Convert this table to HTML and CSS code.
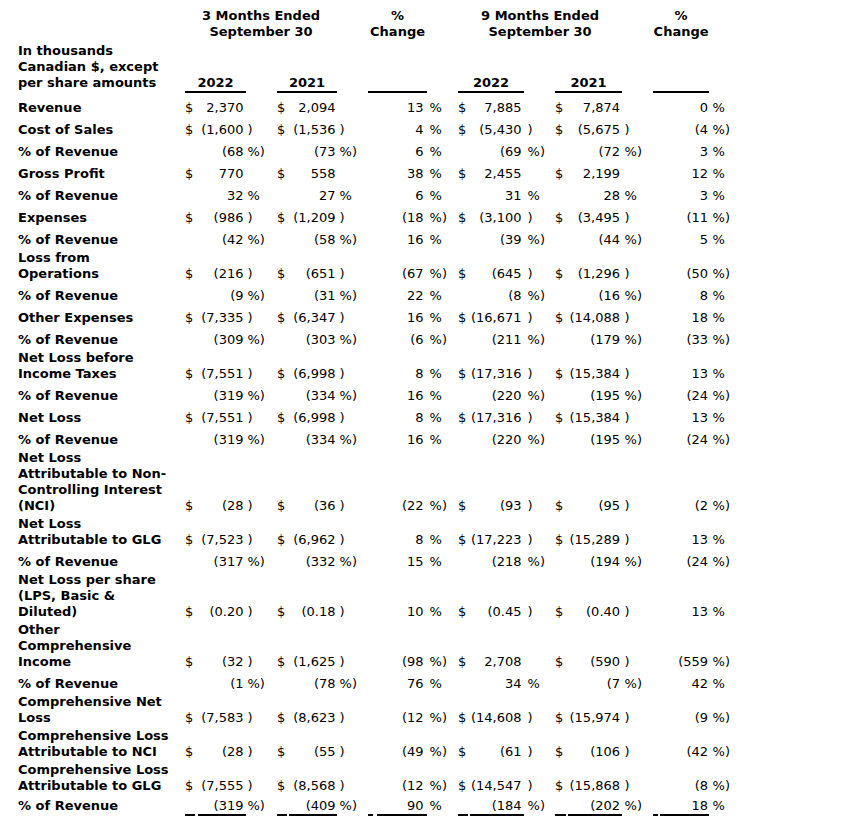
FILE: index.html
```html
<!DOCTYPE html>
<html lang="en">
<head>
<meta charset="utf-8">
<title>Results of Operations</title>
<link rel="stylesheet" href="styles.css">
</head>
<body>
<table class="fin">
<colgroup>
<col class="w-lbl">
<col class="w-c1"><col class="w-n1"><col class="w-s">
<col class="w-c2"><col class="w-n2"><col class="w-s">
<col class="w-c3"><col class="w-n3"><col class="w-s">
<col class="w-c4"><col class="w-n4"><col class="w-s">
<col class="w-c5"><col class="w-n5"><col class="w-s">
<col class="w-c6"><col class="w-n6"><col class="w-s">
</colgroup>
<thead>
<tr class="hd1">
<td></td>
<td colspan="5">3 Months Ended<br>September 30</td><td></td>
<td colspan="2">%<br>Change</td><td></td>
<td colspan="5">9 Months Ended<br>September 30</td><td></td>
<td colspan="2">%<br>Change</td><td></td>
</tr>
<tr class="hd2">
<td class="lbl">In thousands Canadian $, except per share amounts</td>
<td colspan="2" class="yr">2022</td><td></td>
<td colspan="2" class="yr">2021</td><td></td>
<td colspan="2" class="yr">&nbsp;</td><td></td>
<td colspan="2" class="yr">2022</td><td></td>
<td colspan="2" class="yr">2021</td><td></td>
<td colspan="2" class="yr">&nbsp;</td><td></td>
</tr>
</thead>
<tbody>
<tr><td class="lbl">Revenue</td>
<td class="cur">$</td><td class="num">2,370</td><td class="suf"></td>
<td class="cur">$</td><td class="num">2,094</td><td class="suf"></td>
<td class="cur"></td><td class="num">13</td><td class="suf">%</td>
<td class="cur">$</td><td class="num">7,885</td><td class="suf"></td>
<td class="cur">$</td><td class="num">7,874</td><td class="suf"></td>
<td class="cur"></td><td class="num">0</td><td class="suf">%</td></tr>
<tr><td class="lbl">Cost of Sales</td>
<td class="cur">$</td><td class="num">(1,600</td><td class="suf">)</td>
<td class="cur">$</td><td class="num">(1,536</td><td class="suf">)</td>
<td class="cur"></td><td class="num">4</td><td class="suf">%</td>
<td class="cur">$</td><td class="num">(5,430</td><td class="suf">)</td>
<td class="cur">$</td><td class="num">(5,675</td><td class="suf">)</td>
<td class="cur"></td><td class="num">(4</td><td class="suf">%)</td></tr>
<tr><td class="lbl">% of Revenue</td>
<td class="cur"></td><td class="num">(68</td><td class="suf">%)</td>
<td class="cur"></td><td class="num">(73</td><td class="suf">%)</td>
<td class="cur"></td><td class="num">6</td><td class="suf">%</td>
<td class="cur"></td><td class="num">(69</td><td class="suf">%)</td>
<td class="cur"></td><td class="num">(72</td><td class="suf">%)</td>
<td class="cur"></td><td class="num">3</td><td class="suf">%</td></tr>
<tr><td class="lbl">Gross Profit</td>
<td class="cur">$</td><td class="num">770</td><td class="suf"></td>
<td class="cur">$</td><td class="num">558</td><td class="suf"></td>
<td class="cur"></td><td class="num">38</td><td class="suf">%</td>
<td class="cur">$</td><td class="num">2,455</td><td class="suf"></td>
<td class="cur">$</td><td class="num">2,199</td><td class="suf"></td>
<td class="cur"></td><td class="num">12</td><td class="suf">%</td></tr>
<tr><td class="lbl">% of Revenue</td>
<td class="cur"></td><td class="num">32</td><td class="suf">%</td>
<td class="cur"></td><td class="num">27</td><td class="suf">%</td>
<td class="cur"></td><td class="num">6</td><td class="suf">%</td>
<td class="cur"></td><td class="num">31</td><td class="suf">%</td>
<td class="cur"></td><td class="num">28</td><td class="suf">%</td>
<td class="cur"></td><td class="num">3</td><td class="suf">%</td></tr>
<tr><td class="lbl">Expenses</td>
<td class="cur">$</td><td class="num">(986</td><td class="suf">)</td>
<td class="cur">$</td><td class="num">(1,209</td><td class="suf">)</td>
<td class="cur"></td><td class="num">(18</td><td class="suf">%)</td>
<td class="cur">$</td><td class="num">(3,100</td><td class="suf">)</td>
<td class="cur">$</td><td class="num">(3,495</td><td class="suf">)</td>
<td class="cur"></td><td class="num">(11</td><td class="suf">%)</td></tr>
<tr><td class="lbl">% of Revenue</td>
<td class="cur"></td><td class="num">(42</td><td class="suf">%)</td>
<td class="cur"></td><td class="num">(58</td><td class="suf">%)</td>
<td class="cur"></td><td class="num">16</td><td class="suf">%</td>
<td class="cur"></td><td class="num">(39</td><td class="suf">%)</td>
<td class="cur"></td><td class="num">(44</td><td class="suf">%)</td>
<td class="cur"></td><td class="num">5</td><td class="suf">%</td></tr>
<tr><td class="lbl">Loss from Operations</td>
<td class="cur">$</td><td class="num">(216</td><td class="suf">)</td>
<td class="cur">$</td><td class="num">(651</td><td class="suf">)</td>
<td class="cur"></td><td class="num">(67</td><td class="suf">%)</td>
<td class="cur">$</td><td class="num">(645</td><td class="suf">)</td>
<td class="cur">$</td><td class="num">(1,296</td><td class="suf">)</td>
<td class="cur"></td><td class="num">(50</td><td class="suf">%)</td></tr>
<tr><td class="lbl">% of Revenue</td>
<td class="cur"></td><td class="num">(9</td><td class="suf">%)</td>
<td class="cur"></td><td class="num">(31</td><td class="suf">%)</td>
<td class="cur"></td><td class="num">22</td><td class="suf">%</td>
<td class="cur"></td><td class="num">(8</td><td class="suf">%)</td>
<td class="cur"></td><td class="num">(16</td><td class="suf">%)</td>
<td class="cur"></td><td class="num">8</td><td class="suf">%</td></tr>
<tr><td class="lbl">Other Expenses</td>
<td class="cur">$</td><td class="num">(7,335</td><td class="suf">)</td>
<td class="cur">$</td><td class="num">(6,347</td><td class="suf">)</td>
<td class="cur"></td><td class="num">16</td><td class="suf">%</td>
<td class="cur">$</td><td class="num">(16,671</td><td class="suf">)</td>
<td class="cur">$</td><td class="num">(14,088</td><td class="suf">)</td>
<td class="cur"></td><td class="num">18</td><td class="suf">%</td></tr>
<tr><td class="lbl">% of Revenue</td>
<td class="cur"></td><td class="num">(309</td><td class="suf">%)</td>
<td class="cur"></td><td class="num">(303</td><td class="suf">%)</td>
<td class="cur"></td><td class="num">(6</td><td class="suf">%)</td>
<td class="cur"></td><td class="num">(211</td><td class="suf">%)</td>
<td class="cur"></td><td class="num">(179</td><td class="suf">%)</td>
<td class="cur"></td><td class="num">(33</td><td class="suf">%)</td></tr>
<tr><td class="lbl">Net Loss before Income Taxes</td>
<td class="cur">$</td><td class="num">(7,551</td><td class="suf">)</td>
<td class="cur">$</td><td class="num">(6,998</td><td class="suf">)</td>
<td class="cur"></td><td class="num">8</td><td class="suf">%</td>
<td class="cur">$</td><td class="num">(17,316</td><td class="suf">)</td>
<td class="cur">$</td><td class="num">(15,384</td><td class="suf">)</td>
<td class="cur"></td><td class="num">13</td><td class="suf">%</td></tr>
<tr><td class="lbl">% of Revenue</td>
<td class="cur"></td><td class="num">(319</td><td class="suf">%)</td>
<td class="cur"></td><td class="num">(334</td><td class="suf">%)</td>
<td class="cur"></td><td class="num">16</td><td class="suf">%</td>
<td class="cur"></td><td class="num">(220</td><td class="suf">%)</td>
<td class="cur"></td><td class="num">(195</td><td class="suf">%)</td>
<td class="cur"></td><td class="num">(24</td><td class="suf">%)</td></tr>
<tr><td class="lbl">Net Loss</td>
<td class="cur">$</td><td class="num">(7,551</td><td class="suf">)</td>
<td class="cur">$</td><td class="num">(6,998</td><td class="suf">)</td>
<td class="cur"></td><td class="num">8</td><td class="suf">%</td>
<td class="cur">$</td><td class="num">(17,316</td><td class="suf">)</td>
<td class="cur">$</td><td class="num">(15,384</td><td class="suf">)</td>
<td class="cur"></td><td class="num">13</td><td class="suf">%</td></tr>
<tr><td class="lbl">% of Revenue</td>
<td class="cur"></td><td class="num">(319</td><td class="suf">%)</td>
<td class="cur"></td><td class="num">(334</td><td class="suf">%)</td>
<td class="cur"></td><td class="num">16</td><td class="suf">%</td>
<td class="cur"></td><td class="num">(220</td><td class="suf">%)</td>
<td class="cur"></td><td class="num">(195</td><td class="suf">%)</td>
<td class="cur"></td><td class="num">(24</td><td class="suf">%)</td></tr>
<tr><td class="lbl">Net Loss Attributable to Non-Controlling Interest (NCI)</td>
<td class="cur">$</td><td class="num">(28</td><td class="suf">)</td>
<td class="cur">$</td><td class="num">(36</td><td class="suf">)</td>
<td class="cur"></td><td class="num">(22</td><td class="suf">%)</td>
<td class="cur">$</td><td class="num">(93</td><td class="suf">)</td>
<td class="cur">$</td><td class="num">(95</td><td class="suf">)</td>
<td class="cur"></td><td class="num">(2</td><td class="suf">%)</td></tr>
<tr><td class="lbl">Net Loss Attributable to GLG</td>
<td class="cur">$</td><td class="num">(7,523</td><td class="suf">)</td>
<td class="cur">$</td><td class="num">(6,962</td><td class="suf">)</td>
<td class="cur"></td><td class="num">8</td><td class="suf">%</td>
<td class="cur">$</td><td class="num">(17,223</td><td class="suf">)</td>
<td class="cur">$</td><td class="num">(15,289</td><td class="suf">)</td>
<td class="cur"></td><td class="num">13</td><td class="suf">%</td></tr>
<tr><td class="lbl">% of Revenue</td>
<td class="cur"></td><td class="num">(317</td><td class="suf">%)</td>
<td class="cur"></td><td class="num">(332</td><td class="suf">%)</td>
<td class="cur"></td><td class="num">15</td><td class="suf">%</td>
<td class="cur"></td><td class="num">(218</td><td class="suf">%)</td>
<td class="cur"></td><td class="num">(194</td><td class="suf">%)</td>
<td class="cur"></td><td class="num">(24</td><td class="suf">%)</td></tr>
<tr><td class="lbl">Net Loss per share (LPS, Basic &amp; Diluted)</td>
<td class="cur">$</td><td class="num">(0.20</td><td class="suf">)</td>
<td class="cur">$</td><td class="num">(0.18</td><td class="suf">)</td>
<td class="cur"></td><td class="num">10</td><td class="suf">%</td>
<td class="cur">$</td><td class="num">(0.45</td><td class="suf">)</td>
<td class="cur">$</td><td class="num">(0.40</td><td class="suf">)</td>
<td class="cur"></td><td class="num">13</td><td class="suf">%</td></tr>
<tr><td class="lbl">Other Comprehensive Income</td>
<td class="cur">$</td><td class="num">(32</td><td class="suf">)</td>
<td class="cur">$</td><td class="num">(1,625</td><td class="suf">)</td>
<td class="cur"></td><td class="num">(98</td><td class="suf">%)</td>
<td class="cur">$</td><td class="num">2,708</td><td class="suf"></td>
<td class="cur">$</td><td class="num">(590</td><td class="suf">)</td>
<td class="cur"></td><td class="num">(559</td><td class="suf">%)</td></tr>
<tr><td class="lbl">% of Revenue</td>
<td class="cur"></td><td class="num">(1</td><td class="suf">%)</td>
<td class="cur"></td><td class="num">(78</td><td class="suf">%)</td>
<td class="cur"></td><td class="num">76</td><td class="suf">%</td>
<td class="cur"></td><td class="num">34</td><td class="suf">%</td>
<td class="cur"></td><td class="num">(7</td><td class="suf">%)</td>
<td class="cur"></td><td class="num">42</td><td class="suf">%</td></tr>
<tr><td class="lbl">Comprehensive Net Loss</td>
<td class="cur">$</td><td class="num">(7,583</td><td class="suf">)</td>
<td class="cur">$</td><td class="num">(8,623</td><td class="suf">)</td>
<td class="cur"></td><td class="num">(12</td><td class="suf">%)</td>
<td class="cur">$</td><td class="num">(14,608</td><td class="suf">)</td>
<td class="cur">$</td><td class="num">(15,974</td><td class="suf">)</td>
<td class="cur"></td><td class="num">(9</td><td class="suf">%)</td></tr>
<tr><td class="lbl">Comprehensive Loss Attributable to NCI</td>
<td class="cur">$</td><td class="num">(28</td><td class="suf">)</td>
<td class="cur">$</td><td class="num">(55</td><td class="suf">)</td>
<td class="cur"></td><td class="num">(49</td><td class="suf">%)</td>
<td class="cur">$</td><td class="num">(61</td><td class="suf">)</td>
<td class="cur">$</td><td class="num">(106</td><td class="suf">)</td>
<td class="cur"></td><td class="num">(42</td><td class="suf">%)</td></tr>
<tr><td class="lbl">Comprehensive Loss Attributable to GLG</td>
<td class="cur">$</td><td class="num">(7,555</td><td class="suf">)</td>
<td class="cur">$</td><td class="num">(8,568</td><td class="suf">)</td>
<td class="cur"></td><td class="num">(12</td><td class="suf">%)</td>
<td class="cur">$</td><td class="num">(14,547</td><td class="suf">)</td>
<td class="cur">$</td><td class="num">(15,868</td><td class="suf">)</td>
<td class="cur"></td><td class="num">(8</td><td class="suf">%)</td></tr>
<tr class="tot"><td class="lbl">% of Revenue</td>
<td class="cur"></td><td class="num">(319</td><td class="suf">%)</td>
<td class="cur"></td><td class="num">(409</td><td class="suf">%)</td>
<td class="cur"></td><td class="num">90</td><td class="suf">%</td>
<td class="cur"></td><td class="num">(184</td><td class="suf">%)</td>
<td class="cur"></td><td class="num">(202</td><td class="suf">%)</td>
<td class="cur"></td><td class="num">18</td><td class="suf">%</td></tr>
</tbody>
</table>
</body>
</html>
```
FILE: styles.css
```css
body {
  margin: 8px;
  background: #ffffff;
  color: #000000;
  font-family: "DejaVu Sans", Verdana, sans-serif;
  font-size: 13px;
  line-height: 16px;
}

.fin {
  border-collapse: separate;
  border-spacing: 0;
  table-layout: fixed;
  width: 732px;
}

.w-lbl { width: 177px; }
.w-s { width: 31px; }
.w-c1 { width: 13px; }
.w-n1 { width: 48px; }
.w-c2 { width: 12px; }
.w-n2 { width: 48px; }
.w-c3 { width: 9px; }
.w-n3 { width: 50px; }
.w-c4 { width: 12px; }
.w-n4 { width: 54px; }
.w-c5 { width: 13px; }
.w-n5 { width: 54px; }
.w-c6 { width: 7px; }
.w-n6 { width: 49px; }

.fin td {
  padding: 0 0 2px 0;
  vertical-align: bottom;
  white-space: nowrap;
}

.fin .lbl {
  padding: 0 14px 2px 10px;
  font-weight: bold;
  white-space: normal;
}

/* header */
.hd1 td {
  padding-bottom: 3px;
  font-weight: bold;
  text-align: center;
}

.hd2 td {
  padding-bottom: 3px;
}

.hd2 .lbl {
  padding-bottom: 5px;
}

.hd2 .yr {
  padding-bottom: 5px;
  font-weight: bold;
  text-align: center;
  background-image: linear-gradient(#000, #000);
  background-repeat: no-repeat;
  background-size: 100% 2px;
  background-position: left 0 bottom 3px;
}

/* body rows */
.fin tbody tr {
  height: 22px;
}

.fin .cur {
  text-align: left;
}

.fin .num {
  text-align: right;
}

.fin .suf {
  text-align: left;
}

/* per-column inner spacing */
.fin tbody td:nth-child(2) { padding-right: 3px; }
.fin tbody td:nth-child(5) { padding-right: 2px; }
.fin tbody td:nth-child(8) { padding-right: 4px; }
.fin tbody td:nth-child(11) { padding-right: 2px; }
.fin tbody td:nth-child(14) { padding-right: 2px; }
.fin tbody td:nth-child(17) { padding-right: 2px; }

.fin tbody td:nth-child(3) { padding-right: 2.5px; }
.fin tbody td:nth-child(6) { padding-right: 1.5px; }
.fin tbody td:nth-child(9) { padding-right: 3.5px; }
.fin tbody td:nth-child(12) { padding-right: 2.5px; }
.fin tbody td:nth-child(15) { padding-right: 2px; }
.fin tbody td:nth-child(18) { padding-right: 1px; }

.fin tbody td:nth-child(4) { padding-left: 1.5px; }
.fin tbody td:nth-child(7) { padding-left: 2.5px; }
.fin tbody td:nth-child(10) { padding-left: 2.5px; }
.fin tbody td:nth-child(13) { padding-left: 3.5px; }
.fin tbody td:nth-child(16) { padding-left: 2.5px; }
.fin tbody td:nth-child(19) { padding-left: 3.5px; }

/* closing total row with underlines */
.fin .tot td {
  padding-bottom: 4px;
}

.fin .tot .num {
  background-image: linear-gradient(#000, #000);
  background-repeat: no-repeat;
  background-size: 100% 2px;
  background-position: left 0 bottom 2px;
}

.fin .tot .cur {
  background-image: linear-gradient(#000, #000);
  background-repeat: no-repeat;
  background-origin: content-box;
  background-size: 100% 2px;
  background-position: left 0 bottom -2px;
}
```
